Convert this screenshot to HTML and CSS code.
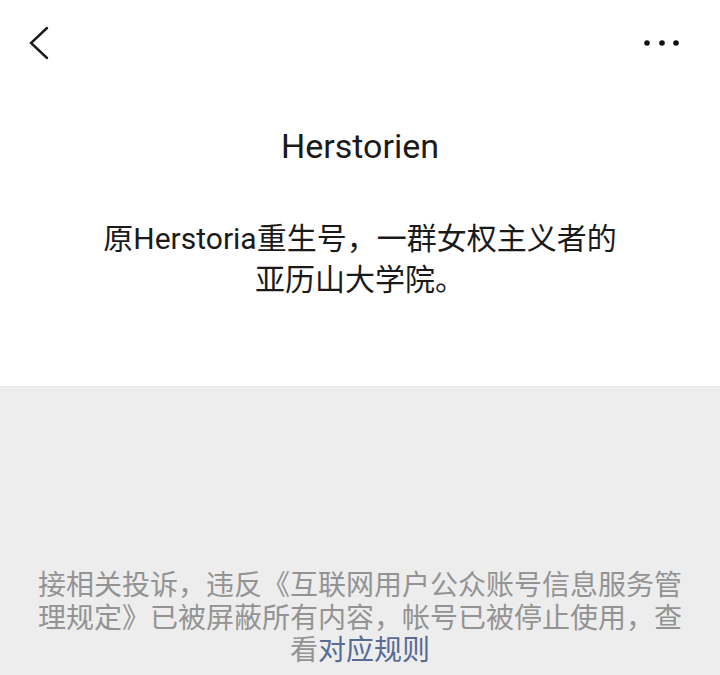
FILE: index.html
```html
<!DOCTYPE html>
<html lang="zh-CN">
<head>
<meta charset="utf-8">
<title>Herstorien</title>
<link rel="stylesheet" href="styles.css">
</head>
<body>
<div class="page">
  <header class="topbar">
    <button class="icon-btn back" aria-label="返回">
      <svg width="24" height="36" viewBox="0 0 24 36"><polyline points="19,3 3,18 19,33" fill="none" stroke="#1a1a1a" stroke-width="2.4" stroke-linecap="round" stroke-linejoin="miter"/></svg>
    </button>
    <button class="icon-btn more" aria-label="更多">
      <svg width="40" height="12" viewBox="0 0 40 12"><circle cx="5" cy="6" r="2.8" fill="#111"/><circle cx="20" cy="6" r="2.8" fill="#111"/><circle cx="34" cy="6" r="2.8" fill="#111"/></svg>
    </button>
  </header>
  <section class="profile">
    <h1 class="name">Herstorien</h1>
    <p class="intro">原Herstoria重生号，一群女权主义者的<br>亚历山大学院。</p>
  </section>
  <section class="notice">
    <p class="notice-text">接相关投诉，违反《互联网用户公众账号信息服务管理规定》已被屏蔽所有内容，帐号已被停止使用，查看<a class="rule-link" href="#">对应规则</a></p>
  </section>
</div>
</body>
</html>
```
FILE: styles.css
```css
html, body {
  margin: 0;
  padding: 0;
  background: #ffffff;
}
body {
  font-family: Roboto, "Noto Sans CJK SC", sans-serif;
  color: #1a1a1a;
}
.page {
  min-height: 675px;
  display: flex;
  flex-direction: column;
}
.topbar {
  height: 86px;
  display: flex;
  justify-content: space-between;
  align-items: flex-start;
  padding: 0 36px 0 28px;
}
.icon-btn {
  background: none;
  border: 0;
  padding: 0;
  margin: 0;
  display: block;
  cursor: pointer;
}
.back {
  margin-top: 25px;
  height: 36px;
}
.back svg, .more svg { display: block; }
.more {
  margin-top: 37px;
  margin-right: 2px;
}
.profile {
  height: 300px;
  text-align: center;
  padding: 0 30px;
  box-sizing: border-box;
}
.name {
  margin: 40px 0 0;
  font-size: 34px;
  font-weight: 400;
  line-height: 40px;
}
.intro {
  margin: 52px 0 0;
  font-size: 30px;
  line-height: 41px;
  color: #1a1a1a;
}
.notice {
  flex: 1;
  background: #ededed;
  border-top: 1px solid #e6e6e6;
  padding: 180px 36px 0;
}
.notice-text {
  margin: 0;
  text-align: center;
  font-family: "Noto Sans CJK SC", sans-serif;
  font-size: 28px;
  line-height: 32.5px;
  color: #939393;
}
.rule-link {
  display: inline-block;
  line-height: 32.5px;
  color: #576b95;
  text-decoration: none;
}
```
